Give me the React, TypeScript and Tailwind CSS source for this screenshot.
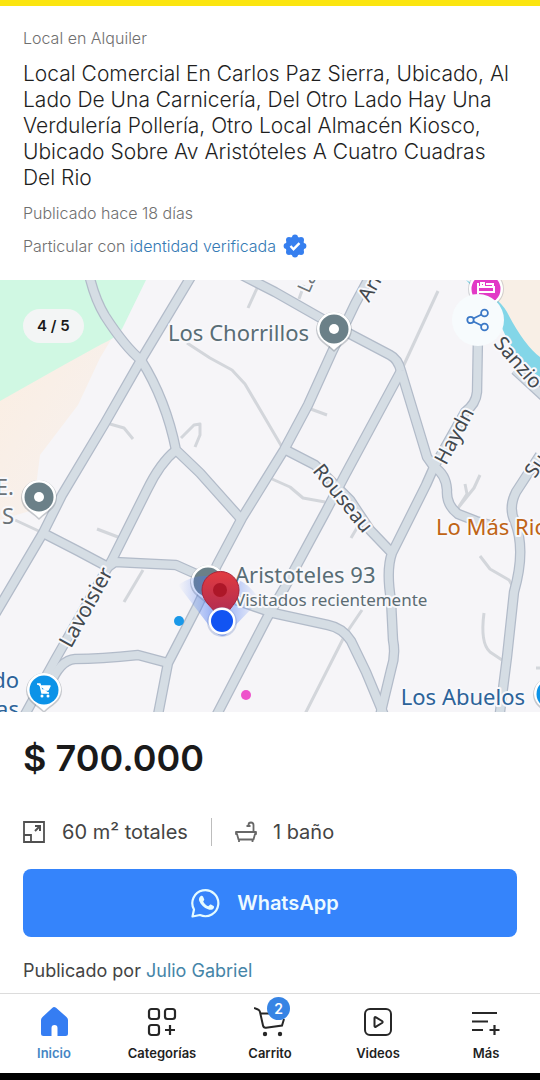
import type { ReactNode } from "react";

const mainRoads = [
  "M88 270 Q94 298 105 316 Q125 347 141 360 Q166 400 176 450 L200 473 L242 520",
  "M198 265 L141 360 L105 423 L62 495 L43 533 L-6 616",
  "M236 272 L275 292 L333 325 L390 355 Q398 359 401 371",
  "M376 265 L355 304 L332 352 L308 405 L284 450 L242 518 L217 565 L197 607 L168 663 L157 720",
  "M401 371 L345 475 L325 513 L285 587 L267 618 L214 720",
  "M401 371 L427 457 L434 467 Q446 474 447 490 Q446 505 458 514 L476 521 L490 525",
  "M434 467 L426 485 L392 553 Q386 570 391 600 L393 640 Q396 655 391 670 L379 720",
  "M284 449 L315 465 L350 500 L370 530 L392 553",
  "M200 578 L230 598 L273 613 L328 625 Q343 628 351 641 L366 672 L386 720",
  "M43 533 L78 551 L108 567 L115 562 L176 565 L205 578",
  "M176 450 Q160 463 147 490 L112 560 L55 660 L22 720",
  "M50 685 Q60 660 75 659 Q100 659 138 655 L168 663",
  "M478 335 L477 392 Q476 404 465 412 L434 467",
  "M540 455 L516 492 Q508 508 515 522 Q526 550 514 592 L507 657 L499 720",
  "M515 370 L550 402",
];

const lanes = [
  "M187 343 L210 358 L232 370 L245 384 L282 447",
  "M258 286 L248 308",
  "M299 299 L304 285",
  "M438 291 L402 369",
  "M308 408 L327 415",
  "M110 424 L124 428 L133 439",
  "M181 438 L194 425 L200 424 L200 435 L195 447",
  "M272 479 L290 487 L303 498 L325 502",
  "M97 529 L118 537",
  "M143 570 L124 602",
  "M15 520 L43 533",
  "M361 521 L351 538",
  "M362 610 L345 635 L305 714",
  "M480 556 L490 569 L509 580 L515 590",
  "M484 613 Q480 643 490 652 L502 660",
  "M480 475 L474 488 L458 508 M465 484 L467 494 L458 508",
  "M536 668 L544 668",
];

function MapLabel({ x, y, size, fill, rotate = 0, anchor = "start", children }: {
  x: number; y: number; size: number; fill: string; rotate?: number; anchor?: "start" | "middle" | "end"; children: string;
}) {
  return (
    <text
      transform={`translate(${x} ${y}) rotate(${rotate})`}
      fontSize={size}
      fill={fill}
      stroke="#f8f8fb"
      strokeWidth="4"
      strokeLinejoin="round"
      paintOrder="stroke"
      textAnchor={anchor}
    >
      {children}
    </text>
  );
}

function MapPin({ x, y, fill, children }: { x: number; y: number; fill: string; children?: ReactNode }) {
  return (
    <g transform={`translate(${x} ${y})`}>
      <path d="M-18 1 A18 18 0 1 1 18 1 C17 13 8 15 0 23 C-8 15 -17 13 -18 1Z" fill="#7d858b" opacity="0.4" />
      <path d="M-17 0 A17 17 0 1 1 17 0 C16 11 7 14 0 21 C-7 14 -16 11 -17 0Z" fill="#fff" />
      <circle r="14.5" fill={fill} />
      {children}
    </g>
  );
}

function LocationMap() {
  return (
    <svg viewBox="0 280 540 432" className="block h-auto w-full font-['Noto_Sans',sans-serif]" role="img" aria-label="Mapa">
      <defs>
        <linearGradient id="beam" x1="0" y1="0" x2="1" y2="0">
          <stop offset="0" stopColor="#5b86f5" stopOpacity="0" />
          <stop offset="0.5" stopColor="#3c6df2" stopOpacity="0.75" />
          <stop offset="1" stopColor="#5b86f5" stopOpacity="0" />
        </linearGradient>
        <linearGradient id="marker" x1="0" y1="0" x2="0" y2="1">
          <stop offset="0" stopColor="#e23b40" />
          <stop offset="1" stopColor="#a52a55" />
        </linearGradient>
        <linearGradient id="sand" x1="0" y1="0" x2="1" y2="1">
          <stop offset="0" stopColor="#fbeee2" />
          <stop offset="0.7" stopColor="#f7f0ec" />
        </linearGradient>
      </defs>
      <rect y="280" width="540" height="432" fill="#f6f5f8" />
      <path d="M0 398 L112 338 L100 358 L78 405 L40 455 L33 510 L0 520Z" fill="url(#sand)" />
      <path d="M0 280 H146 L122 329 Q116 338 100 345 L62 366 L0 401Z" fill="#d0f8e3" />
      <path d="M490 280 H540 V372 L510 330Z" fill="#f8efe6" />
      <path d="M466 280 Q498 296 507 312 Q524 345 540 357 V377 Q512 360 496 312Z" fill="#83d6e8" />

      <g fill="none" stroke="#d3d6db" strokeWidth="3" strokeLinejoin="round">
        {lanes.map((d) => <path key={d} d={d} />)}
      </g>
      <g fill="none" stroke="#b2bbc9" strokeWidth="10.5" strokeLinejoin="round">
        {mainRoads.map((d) => <path key={d} d={d} />)}
      </g>
      <g fill="none" stroke="#d5dde4" strokeWidth="8" strokeLinejoin="round">
        {mainRoads.map((d) => <path key={d} d={d} />)}
      </g>

      <MapLabel x={309} y={341} size={22} fill="#586d75" anchor="end">Los Chorrillos</MapLabel>
      <MapLabel x={309} y={294} size={19} fill="#6c7378" rotate={-66}>La</MapLabel>
      <MapLabel x={369} y={303} size={20} fill="#43494e" rotate={-60}>Ari</MapLabel>
      <MapLabel x={493} y={344} size={20} fill="#43494e" rotate={49}>Sanzio</MapLabel>
      <MapLabel x={446} y={466} size={20} fill="#43494e" rotate={-62}>Haydn</MapLabel>
      <MapLabel x={312} y={471} size={20} fill="#43494e" rotate={51}>Rouseau</MapLabel>
      <MapLabel x={71} y={649} size={21} fill="#43494e" rotate={-61}>Lavoisier</MapLabel>
      <MapLabel x={535} y={479} size={20} fill="#43494e" rotate={-56}>Su</MapLabel>
      <MapLabel x={436} y={535} size={22} fill="#c06415">Lo Más Rio</MapLabel>
      <MapLabel x={525} y={705} size={22} fill="#2c6399" anchor="end">Los Abuelos</MapLabel>
      <MapLabel x={14} y={495} size={22} fill="#6c7378" anchor="end">E.</MapLabel>
      <MapLabel x={14} y={524} size={22} fill="#6c7378" anchor="end">S</MapLabel>
      <MapLabel x={19} y={688} size={22} fill="#2c6399" anchor="end">do</MapLabel>
      <MapLabel x={19} y={717} size={22} fill="#2c6399" anchor="end">as</MapLabel>

      <MapPin x={334} y={329} fill="#6b8088"><circle r="5" fill="#fff" /></MapPin>
      <MapPin x={39} y={497} fill="#6b8088"><circle r="5" fill="#fff" /></MapPin>
      <MapPin x={208} y={582} fill="#6b8088" />
      <MapPin x={44} y={690} fill="#0c93e8">
        <path d="M-7 -6 H-4 L-2 3 H5 M-3 -4 H6 L4 0 H-2" fill="#fff" stroke="#fff" strokeWidth="1.5" strokeLinejoin="round" />
        <circle cx="-2" cy="6" r="1.5" fill="#fff" />
        <circle cx="4" cy="6" r="1.5" fill="#fff" />
      </MapPin>
      <MapPin x={551} y={694} fill="#0c93e8" />
      <g transform="translate(486 289)">
        <circle r="18" fill="#7d858b" opacity="0.3" />
        <circle r="17" fill="#fff" />
        <circle r="14.5" fill="#e23ac6" />
        <path d="M-8 -6 V5 M-8 3 H8 V-2 H-8 M-5 -6 H-2 V-3 H-5Z M0 -5 H7 V-1" fill="none" stroke="#fff" strokeWidth="2" />
      </g>

      <path d="M178 585 Q200 570 222 580 Q242 573 260 600 L226 635 Q222 638 214 632Z" fill="url(#beam)" opacity="0.8" />
      <MapLabel x={235} y={583} size={22} fill="#586d75">Aristoteles 93</MapLabel>
      <MapLabel x={235} y={606} size={17} fill="#5c6c73">Visitados recientemente</MapLabel>
      <path d="M202 590 A18.5 18.5 0 1 1 239 590 C239 603 228 608 222 622 C215 608 202 603 202 590Z" fill="url(#marker)" stroke="#a92438" strokeWidth="1" />
      <circle cx="220" cy="590" r="7" fill="#ad1728" />
      <circle cx="222" cy="622" r="15" fill="#7b93c9" opacity="0.35" />
      <circle cx="222" cy="621" r="13.5" fill="#fff" />
      <circle cx="222" cy="621" r="11" fill="#1254f2" />
      <circle cx="179" cy="621" r="5" fill="#1998e8" />
      <circle cx="246" cy="695" r="5" fill="#ee52cb" />
    </svg>
  );
}

function VerifiedIcon() {
  return (
    <svg viewBox="0 0 24 24" className="size-6" aria-hidden="true">
      <g fill="#367fef">
        <circle cx="12" cy="12" r="9.6" />
        <circle cx="12" cy="3.6" r="3" />
        <circle cx="18" cy="6" r="3" />
        <circle cx="20.4" cy="12" r="3" />
        <circle cx="18" cy="18" r="3" />
        <circle cx="12" cy="20.4" r="3" />
        <circle cx="6" cy="18" r="3" />
        <circle cx="3.6" cy="12" r="3" />
        <circle cx="6" cy="6" r="3" />
      </g>
      <path d="m7.5 12 3 3.2 6-6" fill="none" stroke="#fff" strokeWidth="2.4" />
    </svg>
  );
}

function ShareIcon() {
  return (
    <svg viewBox="0 0 24 24" className="size-6" fill="none" stroke="#3b78c6" strokeWidth="1.8" aria-hidden="true">
      <circle cx="4.5" cy="12" r="3.2" />
      <circle cx="18.5" cy="5" r="3.4" />
      <circle cx="18.5" cy="19" r="3.4" />
      <path d="M7.4 10.5 15.5 6.5 M7.4 13.5 15.5 17.5" />
    </svg>
  );
}

function AreaIcon() {
  return (
    <svg viewBox="0 0 22 22" className="size-[22px]" fill="none" stroke="#505050" strokeWidth="1.8" aria-hidden="true">
      <path d="M1 1 H21 V21 H1Z M1 14 H8 V21" />
      <path d="M12 10 16 6 M12 5 H17 V10" strokeWidth="2" />
    </svg>
  );
}

function BathIcon() {
  return (
    <svg viewBox="0 0 22 22" className="size-[22px]" fill="none" stroke="#686868" strokeWidth="1.8" strokeLinejoin="round" aria-hidden="true">
      <path d="M1 11 H21 V13 H20 L18.5 18.5 H3.5 L2 13 H1Z M4 18.5 V21 M17.5 18.5 V21" />
      <path d="M18.5 11 V4 Q18.5 1.5 16 1.5 Q13.5 1.5 13.5 4 M11.5 5 H15.5" />
    </svg>
  );
}

function WhatsAppIcon() {
  return (
    <svg viewBox="0 0 30 30" className="size-[30px]" fill="none" aria-hidden="true">
      <path d="M1.5 28.5 3 21.5 A13 13 0 1 1 9 27Z" stroke="#e4fbff" strokeWidth="2.2" strokeLinejoin="round" />
      <path d="M9.5 8.2 C10.5 7.4 11.5 7.6 12 8.6 L13.2 11.3 C13.4 12 12.9 12.7 12.2 13.4 C13.2 15.6 14.9 17.2 17.2 18.2 L18.7 16.9 C19.3 16.4 19.8 16.5 20.4 16.8 L22.6 18 C23.4 18.5 23.2 19.4 22.5 20.4 C21.3 22 19.3 22.2 17 21.3 C13 19.8 9.8 16.7 8.3 13 C7.6 11.2 8 9.4 9.5 8.2Z" fill="#e4fbff" />
    </svg>
  );
}

const iconClass = "size-8";

const navItems = [
  {
    label: "Inicio",
    icon: (
      <svg viewBox="0 0 32 32" className={iconClass} aria-hidden="true">
        <path d="M16 2 Q17 2 18 2.8 L28.5 12 Q30 13.5 30 15 V28.5 Q30 31 27.5 31 H19.5 V23 Q19.5 20 16.5 20 Q13.5 20 13.5 23 V31 H5.5 Q3 31 3 28.5 V15 Q3 13.5 4.5 12 L14.5 2.8 Q15.3 2 16 2Z" fill="#357df2" />
      </svg>
    ),
  },
  {
    label: "Categorías",
    icon: (
      <svg viewBox="0 0 32 32" className={iconClass} fill="none" stroke="#272727" strokeWidth="2.2" aria-hidden="true">
        <rect x="3" y="4" width="10" height="10" rx="2.5" />
        <rect x="19" y="4" width="10" height="10" rx="2.5" />
        <rect x="3" y="20" width="10" height="10" rx="2.5" />
        <path d="M24 20 V30 M19 25 H29" />
      </svg>
    ),
  },
  {
    label: "Carrito",
    badge: "2",
    icon: (
      <svg viewBox="0 0 32 32" className={iconClass} fill="none" stroke="#272727" strokeWidth="2" aria-hidden="true">
        <path d="M0 3 L4 4.5 Q5.5 5 6 7 L9 20.5 Q9.5 23 12 22.7 L28 20.5 L30 14 M6 8.5 H24" />
        <circle cx="11" cy="29" r="2.2" fill="#272727" stroke="none" />
        <circle cx="26" cy="29" r="2.2" fill="#272727" stroke="none" />
      </svg>
    ),
  },
  {
    label: "Videos",
    icon: (
      <svg viewBox="0 0 32 32" className={iconClass} fill="none" stroke="#272727" strokeWidth="2" strokeLinejoin="round" aria-hidden="true">
        <rect x="3" y="4" width="26" height="26" rx="5" />
        <path d="M12.5 13 Q12.5 11.5 14 12.3 L20 16 Q21.3 17 20 18 L14 21.7 Q12.5 22.3 12.5 21Z" />
      </svg>
    ),
  },
  {
    label: "Más",
    icon: (
      <svg viewBox="0 0 32 32" className={iconClass} fill="none" stroke="#272727" strokeWidth="2.2" aria-hidden="true">
        <path d="M2 8 H27 M2 16.5 H18 M2 25 H13 M24.5 20 V30 M19.5 25 H29.5" />
      </svg>
    ),
  },
];

export default function App() {
  return (
    <div className="bg-white font-[Inter,sans-serif] text-[#262626]">
      <div className="h-[6px] bg-[#fbe50f]" />
      <main>
        <header className="px-[23px] pb-[22px] pt-[22px] text-[16px] leading-5 font-light text-[#6f6f6f]">
          <p>Local en Alquiler</p>
          <h1 className="mt-[13px] text-[21px] leading-[26px] text-[#1f1f1f]">
            Local Comercial En Carlos Paz Sierra, Ubicado, Al Lado De Una Carnicería, Del Otro Lado Hay Una Verdulería Pollería, Otro Local Almacén Kiosco, Ubicado Sobre Av Aristóteles A Cuatro Cuadras Del Rio
          </h1>
          <p className="mt-[12px]">Publicado hace 18 días</p>
          <p className="mt-[11px] flex items-center gap-[7px]">
            <span>Particular con <a href="#identidad" className="text-[#3479b4]">identidad verificada</a></span>
            <VerifiedIcon />
          </p>
        </header>

        <section className="relative" aria-label="Galería">
          <LocationMap />
          <span className="absolute left-[23px] top-[29px] rounded-full bg-[#f3f5f5] px-[14px] py-[7px] text-[15px] leading-5 font-semibold text-[#1a1a1a]">4 / 5</span>
          <button type="button" aria-label="Compartir" className="absolute right-9 top-[14px] flex size-[52px] items-center justify-center rounded-full bg-[#f7fbfd]">
            <ShareIcon />
          </button>
        </section>

        <section className="px-[23px] pt-6">
          <p className="text-[36px] leading-[44px] font-semibold text-[#1a1a1a]">$ 700.000</p>
          <ul className="mt-[38px] flex h-7 items-center text-[20px] leading-7 text-[#444]">
            <li className="flex items-center gap-[17px] border-r border-[#bdbdbd] pr-[23px]">
              <AreaIcon />
              <span>60 m² totales</span>
            </li>
            <li className="flex items-center gap-4 pl-[23px]">
              <BathIcon />
              <span>1 baño</span>
            </li>
          </ul>
          <button type="button" className="mt-[23px] flex h-[68px] w-full items-center justify-center gap-4 rounded-lg bg-[#3584fb] pr-[10px] text-[20px] font-semibold text-[#edfaff]">
            <WhatsAppIcon />
            WhatsApp
          </button>
          <p className="pb-[10px] pt-[22px] text-[18px] leading-6 text-[#444]">
            Publicado por <a href="#vendedor" className="text-[#4585a8]">Julio Gabriel</a>
          </p>
        </section>
      </main>

      <nav className="grid h-[80px] grid-cols-5 border-t border-[#dcdcdc]" aria-label="Principal">
        {navItems.map((item, index) => (
          <a key={item.label} href={`#${item.label}`} className={`flex flex-col items-center pt-[11px] text-[13px] leading-4 font-semibold ${index === 0 ? "text-[#4585c4]" : "text-[#1f1f1f]"}`}>
            <span className="relative">
              {item.icon}
              {item.badge && (
                <span className="absolute -top-2 left-[13px] flex size-[23px] items-center justify-center rounded-full bg-[#3784e4] text-[14px] text-white">{item.badge}</span>
              )}
            </span>
            <span className="mt-2">{item.label}</span>
          </a>
        ))}
      </nav>
      <div className="h-[7px] bg-black" />
    </div>
  );
}
